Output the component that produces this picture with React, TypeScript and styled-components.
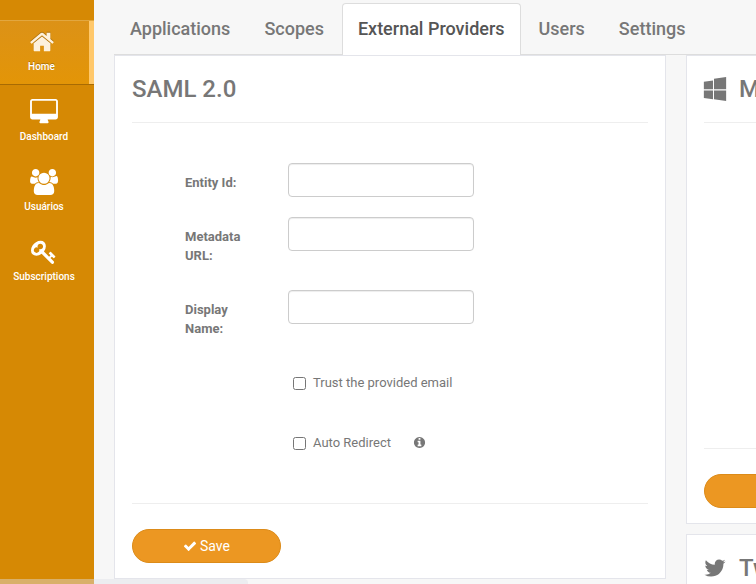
import React from "react";
import styled, { createGlobalStyle } from "styled-components";

const Global = createGlobalStyle`
  *, *::before, *::after { box-sizing: border-box; }
  body { margin: 0; overflow: hidden; background: #f7f7f7; color: #777; font: 13px/19px Roboto, sans-serif; }
`;

const paths = {
  home: "M1472 992v480q0 26-19 45t-45 19h-384v-384h-256v384h-384q-26 0-45-19t-19-45v-480q0-1 .5-3t.5-3l575-474 575 474q1 2 1 6zm223-69l-62 74q-8 9-21 11h-3q-13 0-21-7l-692-577-692 577q-12 8-24 7-13-2-21-11l-62-74q-8-10-7-23.5t11-21.5l719-599q32-26 76-26t76 26l244 204v-195q0-14 9-23t23-9h192q14 0 23 9t9 23v408l219 182q10 8 11 21.5t-7 23.5z",
  desktop: "M1728 992v-832q0-13-9.5-22.5t-22.5-9.5h-1600q-13 0-22.5 9.5t-9.5 22.5v832q0 13 9.5 22.5t22.5 9.5h1600q13 0 22.5-9.5t9.5-22.5zm128-832v1088q0 66-47 113t-113 47h-544q0 37 16 77.5t32 71 16 43.5q0 26-19 45t-45 19h-512q-26 0-45-19t-19-45q0-14 16-44t32-70 16-78h-544q-66 0-113-47t-47-113v-1088q0-66 47-113t113-47h1600q66 0 113 47t47 113z",
  users: "M529 896q-162 5-265 128h-134q-82 0-138-40.5t-56-118.5q0-353 124-353 6 0 43.5 21t97.5 42.5 119 21.5q67 0 133-23-5 37-5 66 0 159 93 293zm1071 637q0 120-73 189.5t-194 69.5h-874q-121 0-194-69.5t-73-189.5q0-53 3.5-103.5t14-109 26.5-108.5 43-97.5 62-81 85.5-53.5 111.5-20q10 0 43 21.5t73 48 107 48 135 21.5 135-21.5 107-48 73-48 43-21.5q61 0 111.5 20t85.5 53.5 62 81 43 97.5 26.5 108.5 14 109 3.5 103.5zm-1024-1277q0 106-75 181t-181 75-181-75-75-181 75-181 181-75 181 75 75 181zm704 384q0 159-112.5 271.5t-271.5 112.5-271.5-112.5-112.5-271.5 112.5-271.5 271.5-112.5 271.5 112.5 112.5 271.5zm576 225q0 78-56 118.5t-138 40.5h-134q-103-123-265-128 93-134 93-293 0-29-5-66 66 23 133 23 59 0 119-21.5t97.5-42.5 43.5-21q124 0 124 353zm-128-609q0 106-75 181t-181 75-181-75-75-181 75-181 181-75 181 75 75 181z",
  key: "M832 512q0-80-56-136t-136-56-136 56-56 136q0 42 19 83-41-19-83-19-80 0-136 56t-56 136 56 136 136 56 136-56 56-136q0-42-19-83 41 19 83 19 80 0 136-56t56-136zm851 704q0 17-49 66t-66 49q-9 0-28.5-16t-36.5-33-38.5-40-24.5-26l-96 96 220 220q28 28 28 68 0 42-39 81t-81 39q-40 0-68-28l-671-671q-176 131-365 131-163 0-265.5-102.5t-102.5-265.5q0-160 95-313t248-248 313-95q163 0 265.5 102.5t102.5 265.5q0 189-131 365l355 355 96-96q-3-3-26-24.5t-40-38.5-33-36.5-16-28.5q0-17 49-66t66-49q13 0 23 10 6 6 46 44.5t82 79.5 86.5 86 73 78 28.5 41z",
  check: "M1671 566q0 40-28 68l-724 724-136 136q-28 28-68 28t-68-28l-136-136-362-362q-28-28-28-68t28-68l136-136q28-28 68-28t68 28l294 295 656-657q28-28 68-28t68 28l136 136q28 28 28 68z",
  info: "M1152 1376v-160q0-14-9-23t-23-9h-96v-512q0-14-9-23t-23-9h-320q-14 0-23 9t-9 23v160q0 14 9 23t23 9h96v320h-96q-14 0-23 9t-9 23v160q0 14 9 23t23 9h448q14 0 23-9t9-23zm-128-896v-160q0-14-9-23t-23-9h-192q-14 0-23 9t-9 23v160q0 14 9 23t23 9h192q14 0 23-9t9-23zm640 416q0 209-103 385.5t-279.5 279.5-385.5 103-385.5-103-279.5-279.5-103-385.5 103-385.5 279.5-279.5 385.5-103 385.5 103 279.5 279.5 103 385.5z",
  twitter: "M1684 408q-67 98-162 167 1 14 1 42 0 130-38 259.5t-115.5 248.5-184.5 210.5-258 146-323 54.5q-271 0-496-145 35 4 78 4 225 0 401-138-105-2-188-64.5t-114-159.5q33 5 61 5 43 0 85-11-112-23-185.5-111.5t-73.5-205.5v-4q68 38 146 41-66-44-105-115t-39-154q0-88 44-163 121 149 294.5 238.5t371.5 99.5q-8-38-8-74 0-134 94.5-228.5t228.5-94.5q140 0 236 102 109-21 205-78-37 115-142 178 93-10 186-50z",
  windows: "M746 1006v651l-682-94v-557h682zm0-743v659h-682v-565zm982 743v786l-907-125v-661h907zm0-1006v922h-907v-797z",
};

const Svg = styled.svg<{ $size: number }>`
  display: block;
  flex: none;
  width: ${(p) => p.$size}px;
  height: ${(p) => p.$size}px;
  fill: currentColor;
  overflow: visible;
`;

const Icon = ({ name, size }: { name: keyof typeof paths; size: number }) => (
  <Svg $size={size} viewBox="0 0 1792 1792" aria-hidden="true"><path d={paths[name]} /></Svg>
);

const Page = styled.div`
  display: flex;
  height: 584px;
  width: 756px;
  overflow: hidden;
`;

const Sidebar = styled.nav`
  flex: none;
  width: 94px;
  padding-top: 20px;
  background: #d68904;
`;

const NavItem = styled.a<{ $active?: boolean }>`
  display: flex;
  flex-direction: column;
  align-items: center;
  height: ${(p) => (p.$active ? 65 : 70)}px;
  padding-top: ${(p) => (p.$active ? 8 : 14)}px;
  padding-right: 6px;
  color: #fff;
  ${(p) => p.$active && `
    border-top: 1px solid #e2a740;
    border-bottom: 1px solid #a86b03;
    background: linear-gradient(#dc9217, #e39507);
    box-shadow: inset -5px 0 #ffc86b;
    padding-right: 11px;
    text-shadow: 0 -1px 0 rgba(0, 0, 0, 0.25);
    svg { color: #fdf1dd; filter: drop-shadow(0 -1px 0 rgba(0, 0, 0, 0.22)); }
  `}
`;

const NavLabel = styled.span`
  margin-top: 5px;
  font-size: 10px;
  line-height: 14px;
  font-weight: 500;
  white-space: nowrap;
`;

const Main = styled.main`
  flex: none;
  width: 800px;
  padding: 3px 0 0 20px;
`;

const Tabs = styled.div`
  display: flex;
  height: 52px;
  border-bottom: 1px solid #ddd;
`;

const Tab = styled.button<{ $active?: boolean }>`
  height: 52px;
  margin: 0 2px 0 0;
  padding: 0 15px 2px;
  border: 1px solid transparent;
  border-bottom: 0;
  border-radius: 4px 4px 0 0;
  background: transparent;
  color: #777;
  font: 500 18px/48px Roboto, sans-serif;
  white-space: nowrap;
  ${(p) => p.$active && "background: #fff; border-color: #ddd; color: #555;"}
`;

const Columns = styled.div`
  display: grid;
  grid-template-columns: 552px 552px;
  column-gap: 20px;
  align-items: start;
`;

const Stack = styled.div`
  display: flex;
  flex-direction: column;
  gap: 10px;
`;

const Card = styled.section<{ $height: number }>`
  display: flex;
  flex-direction: column;
  height: ${(p) => p.$height}px;
  padding: 0 17px 15px;
  border: 1px solid #e4e5eb;
  background: #fff;
`;

const CardTitle = styled.h2`
  display: flex;
  align-items: center;
  gap: 12px;
  flex: none;
  height: 67px;
  margin: 0;
  border-bottom: 1px solid #eee;
  font: 500 24px/66px Roboto, sans-serif;
  svg { margin-left: -1px; }
`;

const CardFooter = styled.footer`
  margin-top: auto;
  padding-top: 25px;
  border-top: 1px solid #eee;
`;

const SaveButton = styled.button`
  display: flex;
  align-items: center;
  justify-content: center;
  gap: 3px;
  width: 149px;
  height: 34px;
  padding: 0 0 1px;
  border: 1px solid #dc8b19;
  border-radius: 17px;
  background: #ec9722;
  color: #fff;
  font: 400 14px/20px Roboto, sans-serif;
`;

const Form = styled.form`
  padding: 40px 53px 0;
`;

const Field = styled.label<{ $height: number }>`
  display: grid;
  grid-template-columns: 103px 186px;
  align-items: start;
  height: ${(p) => p.$height}px;
`;

const FieldLabel = styled.span`
  width: 73px;
  padding-top: 10px;
  font-weight: 700;
`;

const Input = styled.input`
  width: 186px;
  height: 34px;
  padding: 6px 12px;
  border: 1px solid #ccc;
  border-radius: 4px;
  box-shadow: inset 0 1px 1px rgba(0, 0, 0, 0.075);
`;

const CheckRow = styled.label`
  display: flex;
  align-items: center;
  height: 20px;
  margin: 0 0 40px 108px;
  svg { margin-left: 22px; }
`;

const Checkbox = styled.input`
  width: 13px;
  height: 13px;
  margin: 2px 7px 0 0;
`;

const StatusBar = styled.div`
  position: fixed;
  left: 0;
  bottom: 0;
  width: 248px;
  height: 5px;
  border-radius: 0 4px 0 0;
  background: rgba(222, 225, 230, 0.45);
`;

const Save = () => (
  <SaveButton type="button"><Icon name="check" size={14} />Save</SaveButton>
);

export default function App() {
  return (
    <Page>
      <Global />
      <Sidebar>
        <NavItem $active><Icon name="home" size={26} /><NavLabel>Home</NavLabel></NavItem>
        <NavItem><Icon name="desktop" size={26} /><NavLabel>Dashboard</NavLabel></NavItem>
        <NavItem><Icon name="users" size={26} /><NavLabel>Usuários</NavLabel></NavItem>
        <NavItem><Icon name="key" size={26} /><NavLabel>Subscriptions</NavLabel></NavItem>
      </Sidebar>
      <Main>
        <Tabs>
          <Tab>Applications</Tab>
          <Tab>Scopes</Tab>
          <Tab $active>External Providers</Tab>
          <Tab>Users</Tab>
          <Tab>Settings</Tab>
        </Tabs>
        <Columns>
          <Card $height={524}>
            <CardTitle>SAML 2.0</CardTitle>
            <Form>
              <Field $height={54}><FieldLabel>Entity Id:</FieldLabel><Input /></Field>
              <Field $height={73}><FieldLabel>Metadata URL:</FieldLabel><Input /></Field>
              <Field $height={82}><FieldLabel>Display Name:</FieldLabel><Input /></Field>
              <CheckRow><Checkbox type="checkbox" />Trust the provided email</CheckRow>
              <CheckRow><Checkbox type="checkbox" />Auto Redirect<Icon name="info" size={13} /></CheckRow>
            </Form>
            <CardFooter><Save /></CardFooter>
          </Card>
          <Stack>
            <Card $height={469}>
              <CardTitle><Icon name="windows" size={24} />Microsoft</CardTitle>
              <CardFooter><Save /></CardFooter>
            </Card>
            <Card $height={469}>
              <CardTitle><Icon name="twitter" size={24} />Twitter</CardTitle>
            </Card>
          </Stack>
        </Columns>
      </Main>
      <StatusBar />
    </Page>
  );
}
